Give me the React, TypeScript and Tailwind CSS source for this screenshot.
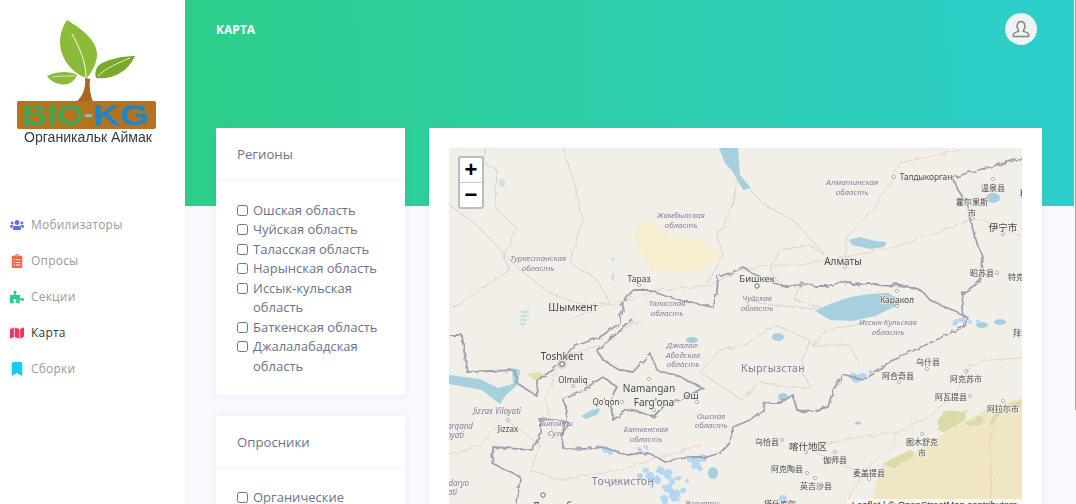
import React from "react";
import { FaUsers, FaClipboardList, FaPuzzlePiece, FaMap, FaBookmark } from "react-icons/fa";

const nav = [
  { label: "Мобилизаторы", Icon: FaUsers, icon: "text-[#5e72e4]", text: "text-[#9a9a9a]" },
  { label: "Опросы", Icon: FaClipboardList, icon: "text-[#fb6340]", text: "text-[#9a9a9a]" },
  { label: "Секции", Icon: FaPuzzlePiece, icon: "text-[#2dce89]", text: "text-[#9a9a9a]" },
  { label: "Карта", Icon: FaMap, icon: "text-[#f5365c]", text: "text-[#3a3a3a]" },
  { label: "Сборки", Icon: FaBookmark, icon: "text-[#11cdef]", text: "text-[#9a9a9a]" },
];

const regions = [
  "Ошская область",
  "Чуйская область",
  "Таласская область",
  "Нарынская область",
  "Иссык-кульская область",
  "Баткенская область",
  "Джалалабадская область",
];

function Logo() {
  return (
    <svg width="185" height="150" viewBox="0 0 185 150" className="block blur-[0.3px]">
      <path d="M67 20 C80 28 98 40 97 56 C96 66 90 74 87 78 C72 74 60 58 60 42 C60 33 63 26 67 20 Z" fill="#8cbb3a" />
      <path d="M72 34 C80 48 86 62 86 77" stroke="#e6f2c8" strokeWidth="1.2" fill="none" />
      <path d="M135 56 C122 56 104 60 98 66 C95 70 95 75 96 78 C112 80 128 72 135 56 Z" fill="#7aa82c" />
      <path d="M98 76 C106 68 118 63 130 58" stroke="#e6f2c8" strokeWidth="1" fill="none" />
      <path d="M47 76 C56 72 68 70 77 75 C74 82 68 86 60 84 C54 83 50 80 47 76 Z" fill="#8cbb3a" />
      <path d="M52 77 C60 76 68 76 75 76" stroke="#e6f2c8" strokeWidth="0.8" fill="none" />
      <path d="M85 78 L90 79 C89 86 90 94 93 102 L76 102 C83 96 86 88 85 78 Z" fill="#a9661f" />
      <rect x="17" y="101" width="139" height="28" rx="2" fill="#b5721f" />
      <text x="22" y="125" fontFamily="'Liberation Sans', sans-serif" fontSize="30" fontWeight="700" fill="#3ea655" textLength="62" lengthAdjust="spacingAndGlyphs">BIO</text>
      <rect x="85" y="114" width="7" height="3" fill="#9fb3a8" />
      <text x="93" y="125" fontFamily="'Liberation Sans', sans-serif" fontSize="30" fontWeight="700" fill="#1f86c6" textLength="56" lengthAdjust="spacingAndGlyphs">KG</text>
      <text x="24" y="142" fontFamily="'Liberation Sans', sans-serif" fontSize="14" fill="#3a3a3a" textLength="128" lengthAdjust="spacingAndGlyphs">Органикальк Аймак</text>
    </svg>
  );
}

function Sidebar() {
  return (
    <aside className="w-[185px] shrink-0 bg-white flex flex-col">
      <div className="h-[206px]">
        <Logo />
      </div>
      <nav className="flex flex-col pt-[1px]">
        {nav.map(({ label, Icon, icon, text }) => (
          <div key={label} className="h-[36px] flex items-center pl-[9px]">
            <span className="w-[15px] flex justify-center mr-[7px]">
              <Icon className={`${icon} text-[14px]`} />
            </span>
            <span className={`${text} text-[12px] tracking-[0.2px]`}>{label}</span>
          </div>
        ))}
      </nav>
    </aside>
  );
}

function Check({ label }: { label: string }) {
  return (
    <label className="flex items-start text-[13px] leading-[19.5px] text-[#6a7489]">
      <input type="checkbox" className="w-[11px] h-[11px] mt-[4px] mr-[5px] shrink-0" />
      <span>{label}</span>
    </label>
  );
}

function FilterCard({ title, items }: { title: string; items: string[] }) {
  return (
    <section className="bg-white shadow-[0_0_6px_rgba(136,152,170,0.12)]">
      <div className="h-[52px] border-b border-[#f2f3f6] pl-[21px] pr-[20px] pt-[17px] text-[13.2px] leading-[18px] text-[#6a7489]">{title}</div>
      <div className="pl-[21px] pr-[20px] pt-[20.5px] pb-[18.5px] flex flex-col">
        {items.map((i) => (
          <Check key={i} label={i} />
        ))}
      </div>
    </section>
  );
}

const countryBorders = [
  "M717 292 L718 277 L732 272 L743 267 L750 272 L760 277 L770 282 L785 286 L800 285 L803 283 L815 286 L827 286 L838 283 L850 282 L853 285 L870 283 L885 286 L900 285 L915 288 L923 292 L930 300 L942 306 L953 310 L967 317 L963 327 L950 333 L930 343 L910 352 L890 360 L883 368 L863 380 L843 375 L833 390 L828 407 L807 412 L797 410 L793 395 L780 403 L765 403 L763 410 L750 420 L733 427 L730 443 L720 453 L707 457 L690 457 L673 460 L667 463 L647 452 L627 455 L603 447 L585 449 L563 448 L562 433 L570 423 L555 419 L540 420 L540 433 L533 450 L493 447 L492 463 L520 477 L517 504",
  "M620 317 L623 303 L633 290 L650 290 L665 296 L680 300 L693 303 L713 307 L717 292",
  "M450 335 L462 335 L467 372 L490 371 L515 370 L517 383 L538 397 L537 380 L553 370 L573 347 L600 337 L620 323 L620 317",
  "M633 320 L615 335 L597 350 L603 360 L620 370 L633 372 L650 353 L657 370 L680 377 L703 388 L680 400 L665 405 L653 417 L640 412 L627 410 L613 420 L610 400 L617 387 L603 377 L583 390 L562 398 L568 412 L562 433",
  "M1022 158 L990 167 L970 172 L953 178 L958 190 L968 205 L970 220 L976 240 L983 257 L982 270 L978 283 L963 293 L962 305 L963 317",
];

const thinBorders = [
  "M563 148 C572 175 580 200 582 220 L570 263 L590 275 L597 280 L610 303",
  "M485 148 L483 163 L497 170 L495 208 L517 228 L503 257 L510 270 L480 290 L450 310",
  "M450 205 L480 228 L503 253 L520 270 L550 293 L580 304 L607 303",
  "M737 180 L733 207 L718 237 L723 257 L707 283",
  "M750 190 L765 205 L795 222 L825 255 L810 245 L780 250 L770 270 L782 288",
  "M800 285 L795 300 L830 310 L770 305 L750 300",
  "M812 388 L800 370 L810 340 L775 325 L745 345 L720 350 L700 372 L742 400 L760 382 L790 388 L812 388",
  "M870 322 L830 330 L812 345 L850 345 L860 365",
];

const roads = [
  "M960 150 L900 163 L893 177 L878 203 L847 237 L845 257 L893 247 L937 233 L967 220 L983 220 L1022 237",
  "M845 257 L800 265 L770 265 L740 270 L710 285 L660 290 L630 300 L600 306 L570 320",
  "M1022 358 L990 360 L970 365 L955 395 L925 418 L898 432 L860 437 L820 445 L802 446",
  "M898 432 L892 448 L870 465 L860 480 L845 504",
  "M802 446 L835 462 L868 477",
  "M1000 410 L990 440 L992 504",
  "M507 420 L540 445 L530 470 L560 480 L620 470 L700 445",
  "M562 358 L545 400 L555 440",
  "M450 455 L480 445 L500 420",
  "M562 358 L600 345 L640 320",
];

const water: [number, number, number, number][] = [
  [692, 340, 6, 3], [778, 337, 6, 4], [783, 397, 5, 4], [858, 423, 3, 1.5], [993, 198, 7, 5], [713, 473, 5, 6], [982, 325, 6, 3], [1000, 322, 6, 3],
];

const faint: [number, number, number, number][] = [
  [502, 183, 3, 4], [613, 259, 2, 1.5], [613, 277, 1.5, 4], [525, 312, 5, 1.5], [525, 316, 5, 1.5], [523, 320, 4, 1.5], [523, 324, 3, 1.5],
];

const snow: [number, number, number][] = [
  [640, 476, 3], [646, 470, 3], [650, 476, 4], [657, 480, 4], [660, 470, 4], [668, 474, 5], [672, 482, 4], [678, 478, 3], [668, 488, 5], [675, 495, 6], [665, 500, 4], [683, 490, 3], [652, 486, 2], [688, 482, 2],
  [690, 459, 3], [696, 462, 4], [703, 458, 4], [700, 468, 3], [694, 466, 3], [605, 449, 3], [610, 452, 3], [640, 450, 2], [646, 447, 2], [590, 450, 2],
  [855, 378, 4], [862, 376, 4], [870, 372, 2], [956, 322, 4], [962, 320, 3], [970, 322, 2], [978, 321, 2], [782, 498, 4], [775, 503, 3],
];

const region = [
  ["Жамбылская", 681, 218], ["область", 681, 228], ["Туркестанская", 538, 261], ["область", 538, 271], ["Таласская", 667, 306], ["область", 667, 316],
  ["Чуйская", 757, 301], ["область", 757, 311], ["Алматинская", 852, 185], ["область", 852, 195], ["Иссык-Кульская", 888, 325], ["область", 888, 335],
  ["Джалал-", 683, 348], ["Абадская", 683, 358], ["область", 683, 367], ["Ошская", 711, 419], ["область", 711, 428], ["Баткенская", 646, 432], ["область", 646, 442],
  ["Jizzax Viloyati", 497, 414], ["Вилояти", 556, 426], ["Сугд", 556, 436], ["Вилояти", 702, 506],
] as [string, number, number][];

const regionEnd = [["Samarqand", 473, 429], ["Viloyati", 464, 438], ["Qashqadaryo", 469, 486], ["Viloyati", 457, 495]] as [string, number, number][];

const cities = [
  ["Шымкент", 573, 311, 10.5], ["Тараз", 639, 282, 8.5], ["Бишкек", 757, 282, 9.5], ["Алматы", 843, 265, 10], ["Талдыкорган", 926, 180, 8.3], ["Каракол", 897, 303, 8.5],
  ["Toshkent", 562, 360, 10], ["Olmaliq", 573, 383, 8], ["Namangan", 649, 392, 10], ["Qo'qon", 606, 405, 8], ["Farg'ona", 654, 406, 10], ["Ош", 691, 399, 9.5], ["Jizzax", 508, 432, 8],
  ["Душанбе", 555, 510, 10], ["温泉县", 993, 191, 8], ["霍尔果斯", 972, 205, 8], ["市", 972, 216, 8], ["伊宁市", 1003, 231, 9.5], ["昭苏县", 982, 276, 8],
  ["阿合奇县", 898, 379, 8], ["乌什县", 928, 365, 8], ["阿克苏市", 966, 382, 8], ["阿瓦提县", 951, 400, 8], ["阿拉尔市", 1003, 412, 8], ["图木舒克", 922, 445, 8], ["市", 922, 456, 8],
  ["乌恰县", 767, 445, 8], ["喀什地区", 808, 450, 9.5], ["伽师县", 835, 463, 8], ["阿克陶县", 787, 472, 8], ["麦盖提县", 869, 476, 8], ["英吉沙县", 816, 489, 8], ["塔什库尔", 780, 507, 8],
] as [string, number, number, number][];

const clipped = [["特克斯县", 1008, 280], ["拜城县", 1013, 336], ["精河县", 1020, 196]] as [string, number, number][];

const dots = [[639, 285], [845, 267], [897, 306], [894, 177], [993, 179], [972, 218], [1003, 234], [997, 273], [573, 386], [649, 379], [622, 402], [654, 410], [697, 402], [508, 420], [899, 382], [927, 369], [966, 371], [970, 396], [1003, 401], [922, 434], [782, 440], [835, 452], [807, 473], [869, 479], [815, 478], [806, 452], [897, 291]];

const labelFont = "'Noto Sans', 'Noto Sans CJK SC', sans-serif";

function MapArt() {
  return (
    <svg viewBox="449 148 573 368" width="573" height="368" className="block blur-[0.3px]">
      <defs>
        <filter id="wiggle" x="-5%" y="-5%" width="110%" height="110%" filterUnits="objectBoundingBox">
          <feTurbulence type="fractalNoise" baseFrequency="0.14" numOctaves="2" seed="4" result="n" />
          <feDisplacementMap in="SourceGraphic" in2="n" scale="5" />
        </filter>
      </defs>
      <rect x="449" y="148" width="573" height="368" fill="#f2efe9" />
      <path d="M632 237 L643 218 L670 235 L703 240 L722 257 L690 273 L653 270 L637 247 Z" fill="#f6eecf" />
      <path d="M870 504 L883 463 L915 452 L950 430 L990 407 L1022 398 L1022 516 L870 516 Z" fill="#f1e6c4" />
      <g filter="url(#wiggle)">
        <path d="M937 418 L945 412 L968 410 L965 420 L945 432 L938 430 Z" fill="#d8dca9" />
        <path d="M965 423 L983 416 L985 423 L970 426 Z" fill="#d8dca9" />
        <path d="M883 463 L910 450 L916 453 L893 468 Z" fill="#d8dca9" />
        <path d="M990 418 L1000 408 L1022 400 L1022 406 L1000 412 L990 428 Z" fill="#d8dca9" />
        <path d="M527 374 L540 372 L546 378 L534 380 Z" fill="#dfe3a8" />
        {roads.map((d, i) => (
          <path key={i} d={d} fill="none" stroke="#ecc9b8" strokeWidth="0.8" />
        ))}
        {thinBorders.map((d, i) => (
          <path key={i} d={d} fill="none" stroke="#cfc9c7" strokeWidth="0.8" />
        ))}
      </g>
      <path d="M719 148 L738 148 L740 175 L751 188 L743 190 L733 172 L725 163 Z" fill="#a6d0dd" />
      <path d="M849 240 L860 237 L875 241 L887 242 L884 247 L870 249 L852 245 Z" fill="#a6d0dd" />
      <path d="M815 311 L830 304 L850 297 L870 294 L888 293 L905 302 L890 309 L875 316 L853 321 L830 320 Z" fill="#a6d0dd" />
      <path d="M449 375 L480 379 L498 388 L513 384 L512 368 L520 370 L518 384 L505 396 L500 404 L492 398 L482 390 L449 384 Z" fill="#a6d0dd" />
      <path d="M581 416 L592 410 L600 408 L598 414 L586 419 Z" fill="#a6d0dd" />
      {water.map(([x, y, rx, ry], i) => (
        <ellipse key={i} cx={x} cy={y} rx={rx} ry={ry} fill="#a6d0dd" />
      ))}
      {faint.map(([x, y, rx, ry], i) => (
        <ellipse key={i} cx={x} cy={y} rx={rx} ry={ry} fill="#c9dfe2" />
      ))}
      <g filter="url(#wiggle)">
        {snow.map(([x, y, r], i) => (
          <circle key={i} cx={x} cy={y} r={r} fill="#b3d7f2" />
        ))}
        {countryBorders.map((d, i) => (
          <path key={i} d={d} fill="none" stroke="#a29eae" strokeWidth="1.8" strokeLinejoin="round" />
        ))}
      </g>
      {dots.map(([x, y], i) => (
        <circle key={i} cx={x} cy={y} r="1.6" fill="#fff" stroke="#888" strokeWidth="0.6" />
      ))}
      <circle cx="562" cy="364" r="5" fill="#e8c9c0" />
      <circle cx="562" cy="364" r="2.2" fill="#fff" stroke="#666" />
      <circle cx="757" cy="286" r="2.2" fill="#fff" stroke="#666" />
      <circle cx="543" cy="495" r="2.2" fill="#fff" stroke="#666" />
      <g fontFamily={labelFont} textAnchor="middle" fontStyle="italic" fontSize="8" fill="#8d7a9f">
        {region.map(([t, x, y], i) => (
          <text key={i} x={x} y={y}>{t}</text>
        ))}
      </g>
      <g fontFamily={labelFont} textAnchor="end" fontStyle="italic" fontSize="8" fill="#8d7a9f">
        {regionEnd.map(([t, x, y], i) => (
          <text key={i} x={x} y={y}>{t}</text>
        ))}
      </g>
      <g fontFamily={labelFont} textAnchor="middle" fontSize="10.5" fill="#8c7a9d" letterSpacing="0.3">
        <text x="773" y="372">Кыргызстан</text>
        <text x="623" y="485">Тоҷикистон</text>
      </g>
      <g fontFamily={labelFont} textAnchor="middle" fill="#4a4a4a" stroke="#f2efe9" strokeWidth="1.4" className="[paint-order:stroke]">
        {cities.map(([t, x, y, s], i) => (
          <text key={i} x={x} y={y} fontSize={s}>{t}</text>
        ))}
      </g>
      <g fontFamily={labelFont} fontSize="8" fill="#4a4a4a">
        {clipped.map(([t, x, y], i) => (
          <text key={i} x={x} y={y}>{t}</text>
        ))}
      </g>
    </svg>
  );
}

function MapPanel() {
  return (
    <div className="relative w-[573px] h-[368px] overflow-hidden">
      <MapArt />
      <div className="absolute left-[9px] top-[8px] w-[26px] rounded-[3px] border-2 border-[#bdbdbd] bg-white flex flex-col text-black">
        <div className="h-[25px] flex items-center justify-center text-[22px] font-bold leading-none border-b border-[#cccccc] font-['Liberation_Sans',sans-serif]">+</div>
        <div className="h-[24px] flex items-center justify-center text-[22px] font-bold leading-none font-['Liberation_Sans',sans-serif]">−</div>
      </div>
      <div className="absolute right-0 bottom-0 bg-white/70 px-[5px] h-[17px] leading-[12px] text-[9.5px] text-[#333] whitespace-nowrap font-['Liberation_Sans',sans-serif]">
        Leaflet | © OpenStreetMap contributors
      </div>
    </div>
  );
}

export default function App() {
  return (
    <div className="flex h-[504px] w-full overflow-hidden bg-white font-['Open_Sans',sans-serif]">
      <Sidebar />
      <main className="flex-1 min-w-0 bg-[#f8f9fe] overflow-hidden">
        <header className="h-[206px] bg-[linear-gradient(87deg,#2dce89,#2dcecc)] pl-[31px] pr-[37px] pt-[13px] flex justify-between items-start">
          <h1 className="text-[12px] leading-[33px] font-bold text-white">КАРТА</h1>
          <div className="w-[32px] h-[32px] rounded-full bg-[#eef3f3] flex items-center justify-center">
            <svg width="20" height="20" viewBox="0 0 20 20" fill="none" stroke="#85858a" strokeWidth="1.5" strokeLinejoin="round">
              <path d="M7.2 10.6 C6 9 5.9 6.8 6.4 5.3 C7 3.5 8.4 2.6 10 2.6 C11.6 2.6 13 3.5 13.6 5.3 C14.1 6.8 14 9 12.8 10.6 L12.4 12.2 C14.5 13 16.8 13.6 17.6 15 L17.6 17.4 L2.4 17.4 L2.4 15 C3.2 13.6 5.5 13 7.6 12.2 Z" />
            </svg>
          </div>
        </header>
        <div className="mt-[-78px] pl-[31px] flex items-start gap-[24px]">
          <div className="w-[189px] shrink-0 flex flex-col gap-[21px]">
            <FilterCard title="Регионы" items={regions} />
            <FilterCard title="Опросники" items={["Органические"]} />
          </div>
          <section className="w-[613px] shrink-0 bg-white p-[20px] shadow-[0_0_6px_rgba(136,152,170,0.12)]">
            <MapPanel />
          </section>
        </div>
      </main>
      <div className="w-[2px] shrink-0 bg-[#f8f9fe]">
        <div className="h-[410px] w-[1px] ml-[1px] bg-[#a8a8a8]" />
      </div>
    </div>
  );
}
